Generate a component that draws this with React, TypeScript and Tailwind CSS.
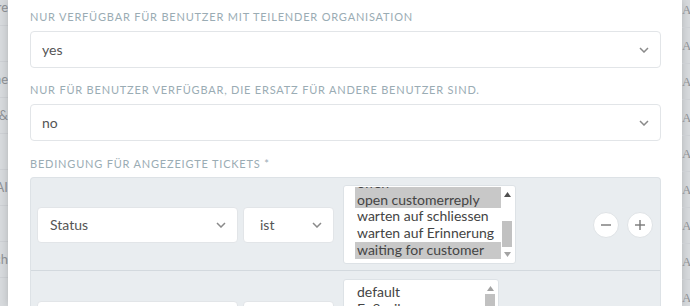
import React from 'react';

const font = { fontFamily: 'Lato, "Open Sans", sans-serif' };

function Chevron() {
  return (
    <svg width="10" height="6" viewBox="0 0 10 6" className="flex-shrink-0">
      <path d="M1 1l4 4 4-4" fill="none" stroke="#8a8a8a" strokeWidth="1.5" />
    </svg>
  );
}

function Select({ value, className, pad = 'pl-[11px]' }: { value: string; className: string; pad?: string }) {
  return (
    <div
      className={`flex items-center justify-between rounded-[4px] border border-[#e2e5e8] bg-white pr-[11px] text-[14px] text-[#555] ${pad} ${className}`}
    >
      <span>{value}</span>
      <Chevron />
    </div>
  );
}

function Label({ children, className }: { children: React.ReactNode; className: string }) {
  return (
    <div className={`text-[11px] leading-[14px] uppercase tracking-[0.8px] text-[#9aacb4] ${className}`}>
      {children}
    </div>
  );
}

function RoundButton({ sign }: { sign: '-' | '+' }) {
  return (
    <button className="flex h-[26px] w-[26px] items-center justify-center rounded-full border border-[#dfe3e6] bg-white">
      <svg width="12" height="12" viewBox="0 0 12 12">
        <path d="M1 6h10" stroke="#777" strokeWidth="1.4" />
        {sign === '+' && <path d="M6 1v10" stroke="#777" strokeWidth="1.4" />}
      </svg>
    </button>
  );
}

function Scrollbar({ atTop }: { atTop?: boolean }) {
  return (
    <div className="flex w-[12px] flex-shrink-0 flex-col items-center bg-white">
      <svg width="7" height="5" viewBox="0 0 7 5" className="mt-[5px]">
        <path d="M0 5L3.5 0 7 5z" fill={atTop ? '#a3a3a3' : '#505050'} />
      </svg>
      {atTop ? (
        <div className="mt-[3px] h-[40px] w-[10px] bg-[#c1c1c1]" />
      ) : (
        <>
          <div className="flex-1" />
          <div className="h-[26px] w-[10px] bg-[#c1c1c1]" />
          <svg width="7" height="5" viewBox="0 0 7 5" className="mb-[5px] mt-[5px]">
            <path d="M0 0L3.5 5 7 0z" fill="#a3a3a3" />
          </svg>
        </>
      )}
    </div>
  );
}

const states = [
  { name: 'offen', selected: true },
  { name: 'open customerreply', selected: true },
  { name: 'warten auf schliessen', selected: false },
  { name: 'warten auf Erinnerung', selected: false },
  { name: 'waiting for customer', selected: true },
];

function SideRow({ text, align }: { text: string; align: 'left' | 'right' }) {
  return (
    <div
      className={`flex h-[36px] items-center overflow-hidden whitespace-nowrap border-b border-[#cdd0d4] text-[13px] text-[#8f9296] ${
        align === 'right' ? 'justify-end' : 'justify-start'
      }`}
    >
      {text}
    </div>
  );
}

export default function App() {
  return (
    <div className="flex h-[306px] w-[690px] overflow-hidden bg-[#d7dadd]" style={font}>
      {/* page behind the modal, left */}
      <div className="w-[8px] flex-shrink-0">
        <div className="-mt-[10px]">
          <SideRow text="Signature" align="right" />
          <SideRow text="" align="right" />
          <SideRow text="Name" align="right" />
          <SideRow text="Tickets &" align="right" />
          <SideRow text="" align="right" />
          <SideRow text="AI" align="right" />
          <SideRow text="" align="right" />
          <SideRow text="Such" align="right" />
          <SideRow text="" align="right" />
        </div>
      </div>

      {/* modal */}
      <div className="w-[674px] flex-shrink-0 bg-white pl-[22px] pr-[21px] pt-[10px] shadow-[0_0_8px_rgba(0,0,0,0.18)]">
        <Label className="">Nur verfügbar für Benutzer mit teilender Organisation</Label>
        <Select value="yes" className="mt-[7px] h-[37px]" />

        <Label className="mt-[15px]">Nur für Benutzer verfügbar, die Ersatz für andere Benutzer sind.</Label>
        <Select value="no" className="mt-[7px] h-[37px]" />

        <Label className="mt-[16px]">Bedingung für angezeigte Tickets *</Label>

        <div className="mt-[6px] rounded-t-[4px] border border-b-0 border-[#dde2e6] bg-[#e9edf0]">
          {/* row 1 */}
          <div className="flex items-center border-b border-[#d3d9de] pb-[6px] pl-[6px] pr-[7px] pt-[7px]">
            <Select value="Status" className="h-[36px] w-[201px]" pad="pl-[12px]" />
            <Select value="ist" className="ml-[5px] h-[36px] w-[91px]" pad="pl-[16px]" />
            <div className="ml-[9px] flex h-[79px] w-[173px] rounded-[3px] border border-[#dde2e6] bg-white py-[1px] pl-[11px] pr-[2px]">
              <div className="flex-1 overflow-hidden">
                <div className="-mt-[12px] text-[14px] leading-[16.7px] text-[#444]">
                  {states.map((s) => (
                    <div key={s.name} className={`whitespace-nowrap px-[2px] ${s.selected ? 'bg-[#c8c8c8]' : ''}`}>
                      {s.name}
                    </div>
                  ))}
                </div>
              </div>
              <Scrollbar />
            </div>
            <div className="flex-1" />
            <div className="flex gap-[8px]">
              <RoundButton sign="-" />
              <RoundButton sign="+" />
            </div>
          </div>

          {/* row 2 */}
          <div className="flex items-center pl-[6px] pr-[7px] pt-[8px]">
            <Select value="" className="h-[36px] w-[201px]" pad="pl-[12px]" />
            <Select value="" className="ml-[5px] h-[36px] w-[91px]" pad="pl-[16px]" />
            <div className="ml-[9px] flex h-[79px] w-[156px] rounded-[3px] border border-[#dde2e6] bg-white py-[1px] pl-[11px] pr-[2px]">
              <div className="flex-1 overflow-hidden pt-[3px] text-[14px] leading-[16.7px] text-[#444]">
                <div className="px-[2px]">default</div>
                <div className="px-[2px]">Fußzeile</div>
                <div className="px-[2px]">Kopfzeile</div>
              </div>
              <Scrollbar atTop />
            </div>
            <div className="flex-1" />
            <div className="flex gap-[8px]">
              <RoundButton sign="-" />
              <RoundButton sign="+" />
            </div>
          </div>
        </div>
      </div>

      {/* page behind the modal, right */}
      <div className="w-[8px] flex-shrink-0" style={{ fontFamily: '"Liberation Serif", serif' }}>
        <div className="-mt-[8px]">
          {Array.from({ length: 9 }).map((_, i) => (
            <SideRow key={i} text="Agent" align="left" />
          ))}
        </div>
      </div>
    </div>
  );
}
